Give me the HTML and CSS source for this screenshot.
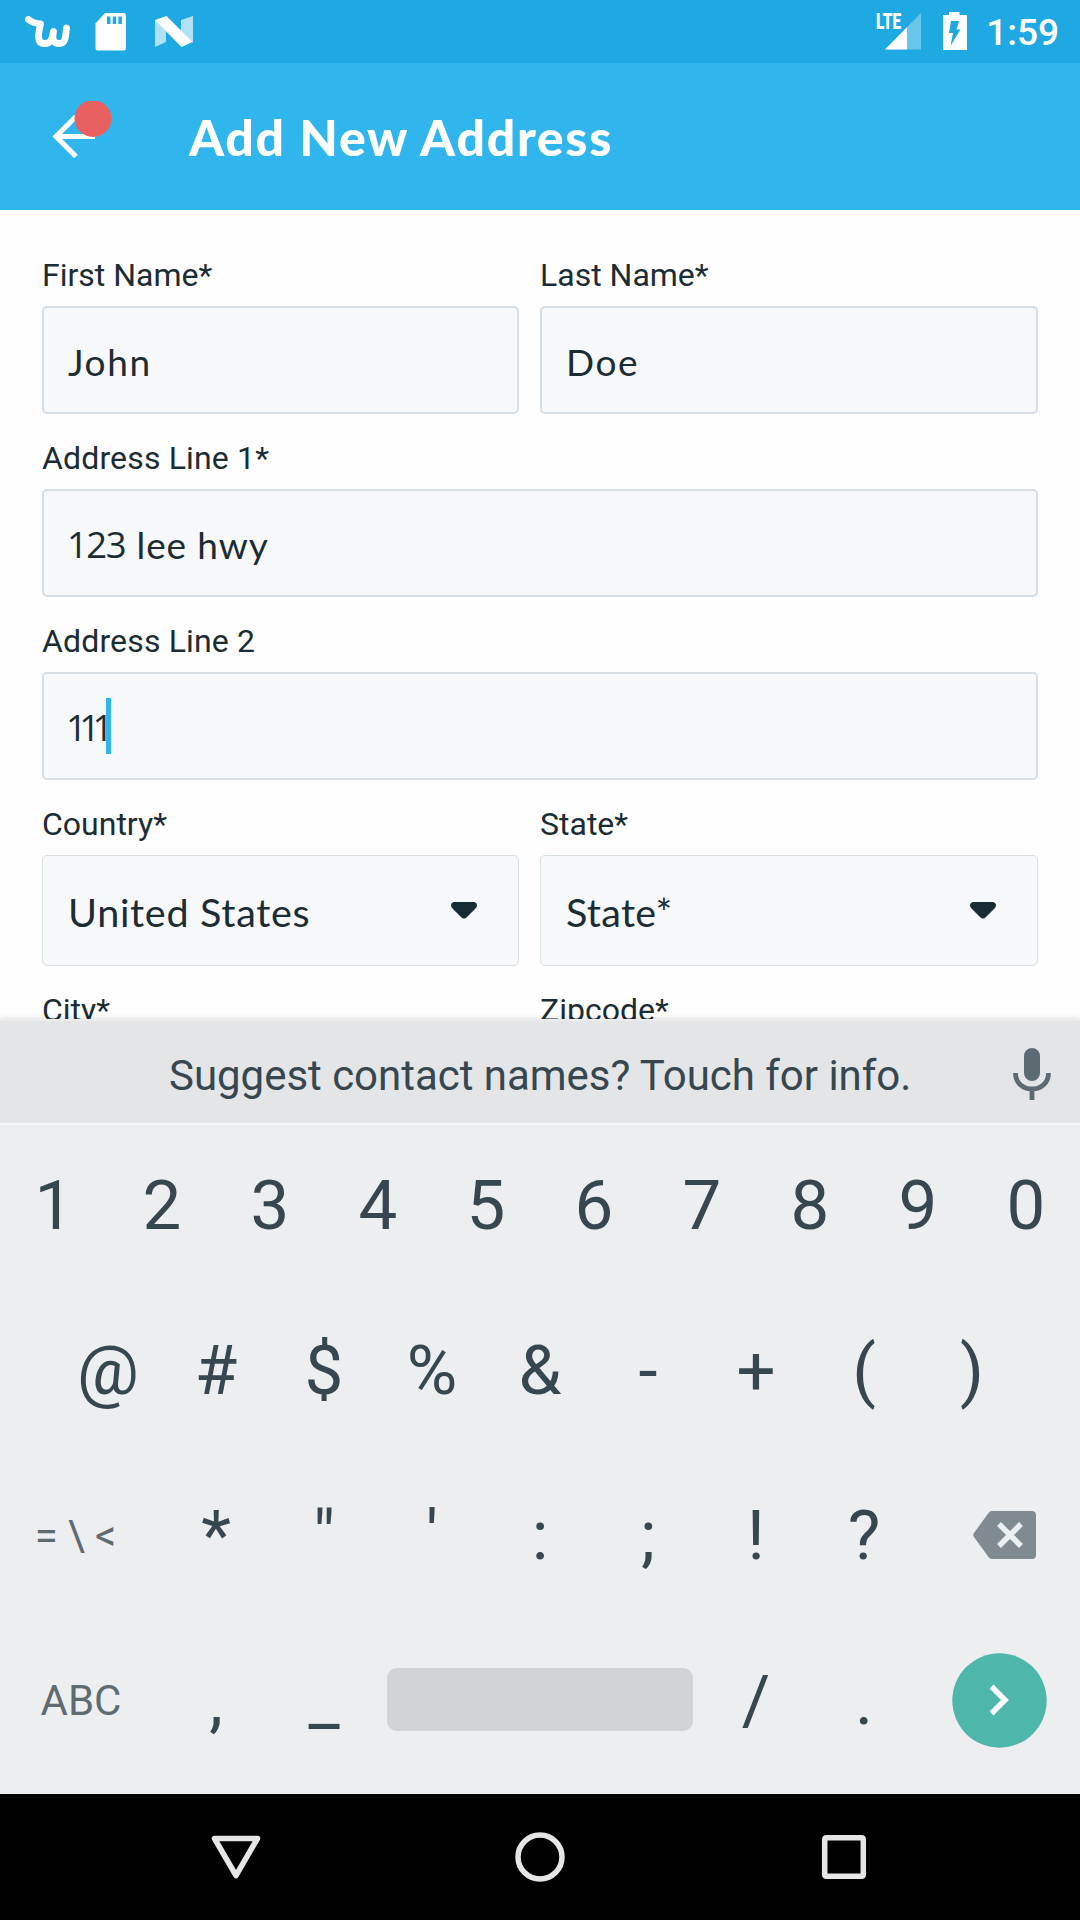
FILE: index.html
```html
<!DOCTYPE html>
<html lang="en">
<head>
<meta charset="utf-8">
<title>Add New Address</title>
<link rel="stylesheet" href="styles.css">
</head>
<body>
<div class="screen">
  <div class="status-bar">
    <svg class="status-notifications" width="180" height="63" viewBox="0 0 180 63">
      <path d="M5.500 19.500C9 22.500 13 23.500 17.500 24C15 35 13.500 43.500 21.500 43.500C29 43.500 29 38 30.500 31.500C29 39 30 43.500 36.500 43.500C43 43.500 42.500 36 43.500 28" fill="none" stroke="#fff" stroke-width="6.800" stroke-linejoin="round" stroke-linecap="round"/>
      <path d="M82 13h18.500a2.500 2.500 0 0 1 2.500 2.500v32.500a2.500 2.500 0 0 1-2.500 2.500h-25.500a2.500 2.500 0 0 1-2.500-2.500v-24.500z" fill="#fff"/>
      <path d="M84 16.500h3.500v7.500h-3.500zM89.700 16.500h3.500v7.500h-3.500zM95.400 16.500h3.500v7.500h-3.500z" fill="#1fa9e3"/>
      <path d="M132 20L143 29V42L132 47zM158 20L170 16V43L158 32z" fill="#fff" opacity=".65"/>
      <path d="M132 20L143.500 16L169.500 42L158.500 47z" fill="#fff"/>
    </svg>
    <div class="status-system">
      <svg width="94" height="63" viewBox="0 0 94 63">
        <path d="M48 13V49.500H12z" fill="#fff" opacity=".33"/>
        <path d="M34 27.200V49.500H12z" fill="#fff"/>
        <text class="lte" x="3" y="29" textLength="25" lengthAdjust="spacingAndGlyphs">LTE</text>
        <path d="M76 12h10.500v3h7.500v35H70V15h6z" fill="#fff"/>
        <path d="M78 21h8l-2.500 8.500h4L77.500 46l2.500-13h-4z" fill="#1fa9e3"/>
      </svg>
      <span class="clock">1:59</span>
    </div>
  </div>

  <header class="app-bar">
    <svg class="back" width="72" height="72" viewBox="0 0 72 72">
      <path d="M51 35.500H12M32 15.500L12 35.500L32 55.500" fill="none" stroke="#fff" stroke-width="5"/>
      <circle cx="49" cy="17.500" r="18.500" fill="#e96061"/>
    </svg>
    <h1 class="title">Add New Address</h1>
  </header>

  <main class="form">
    <div class="field"><label class="label">First Name*</label><div class="input name">John</div></div>
    <div class="field"><label class="label">Last Name*</label><div class="input name">Doe</div></div>
    <div class="field wide"><label class="label address">Address Line 1*</label><div class="input street"><span class="digits">123</span>&nbsp;lee hwy</div></div>
    <div class="field wide"><label class="label address">Address Line 2</label><div class="input"><span class="digits unit">111</span><i class="caret"></i></div></div>
    <div class="field">
      <label class="label">Country*</label>
      <div class="select">United States
        <svg width="26" height="17" viewBox="0 0 26 17"><path d="M3 0H23Q26 .5 26 3.500Q26 5 24 7L16 15Q13 18 10 15L2 7Q0 5 0 3.500Q0 .5 3 0z" fill="#182c34"/></svg>
      </div>
    </div>
    <div class="field">
      <label class="label">State*</label>
      <div class="select state">State*
        <svg width="26" height="17" viewBox="0 0 26 17"><path d="M3 0H23Q26 .5 26 3.500Q26 5 24 7L16 15Q13 18 10 15L2 7Q0 5 0 3.500Q0 .5 3 0z" fill="#182c34"/></svg>
      </div>
    </div>
    <div class="field"><label class="label">City*</label></div>
    <div class="field"><label class="label">Zipcode*</label></div>
  </main>

  <section class="keyboard">
    <div class="suggestions">
      <span class="hint">Suggest contact names? Touch for info.</span>
      <svg class="mic" width="38" height="52" viewBox="0 0 38 52">
        <rect x="11" y="0" width="16" height="33" rx="8" fill="#5c6a71"/>
        <path d="M2.500 25C2.500 35 10 41 19 41S35.500 35 35.500 25M19 40V52" fill="none" stroke="#5c6a71" stroke-width="4.800"/>
      </svg>
    </div>
    <div class="row"><span>1</span><span>2</span><span>3</span><span>4</span><span>5</span><span>6</span><span>7</span><span>8</span><span>9</span><span>0</span></div>
    <div class="row"><span>@</span><span>#</span><span>$</span><span>%</span><span>&amp;</span><span>-</span><span>+</span><span>(</span><span>)</span></div>
    <div class="row">
      <span class="mode symbols">=<b>\</b>&lt;</span><span>*</span><span>"</span><span>'</span><span>:</span><span>;</span><span>!</span><span>?</span>
      <span class="mode">
        <svg class="delete" width="63" height="48" viewBox="0 0 63 48">
          <path d="M19 0H59Q63 0 63 4V44Q63 48 59 48H19Q17 48 15.500 46L1 26Q-.5 24 1 22L15.500 2Q17 0 19 0z" fill="#7f8b91"/>
          <path d="M26 13L48 35M48 13L26 35" stroke="#eceff1" stroke-width="5.500"/>
        </svg>
      </span>
    </div>
    <div class="row">
      <span class="mode">ABC</span><span>,</span><span>_</span><span class="space"></span><span>/</span><span>.</span>
      <span class="mode">
        <svg class="enter" width="95" height="95" viewBox="0 0 95 95">
          <circle cx="47.500" cy="47.500" r="47.200" fill="#4fb6ac"/>
          <path d="M39.500 33.500L53 47L39.500 60.500" fill="none" stroke="#fff" stroke-width="5.500"/>
        </svg>
      </span>
    </div>
  </section>

  <nav class="nav-bar">
    <svg width="56" height="56" viewBox="0 0 56 56"><path d="M6.500 9.500H49.500L28 46.500z" fill="none" stroke="#e6e6e6" stroke-width="5.500" stroke-linejoin="round"/></svg>
    <svg width="56" height="56" viewBox="0 0 56 56"><circle cx="28" cy="28" r="22" fill="none" stroke="#e6e6e6" stroke-width="5.500"/></svg>
    <svg width="56" height="56" viewBox="0 0 56 56"><rect x="8.700" y="8.700" width="38.600" height="38.600" rx="1.500" fill="none" stroke="#e6e6e6" stroke-width="5.500"/></svg>
  </nav>
</div>
</body>
</html>
```

FILE: styles.css
```css
* { box-sizing: border-box; }

body {
  margin: 0;
  font-family: Roboto, "Liberation Sans", sans-serif;
}

.screen {
  display: flex;
  flex-direction: column;
  width: 1080px;
  height: 1920px;
  overflow: hidden;
  background: #fefefe;
}

svg { display: block; flex: none; }

/* Status bar */
.status-bar {
  display: flex;
  justify-content: space-between;
  flex: none;
  height: 63px;
  padding: 0 21px 0 23px;
  background: #1fa9e3;
  color: #fff;
}

.status-system { display: flex; }

.lte {
  font: 900 22px Roboto, sans-serif;
  fill: #fff;
}

.clock {
  padding-left: 19px;
  font-size: 37px;
  font-weight: 500;
  line-height: 66px;
  white-space: nowrap;
}

/* App bar */
.app-bar {
  display: flex;
  align-items: center;
  flex: none;
  height: 147px;
  padding-left: 44px;
  background: #30b5ec;
}

.title {
  margin: 1px 0 0 73px;
  color: #fff;
  font: 900 50px/60px Lato, sans-serif;
  letter-spacing: 1.7px;
  white-space: nowrap;
}

/* Address form */
.form {
  display: grid;
  grid-template-columns: 477px 498px;
  column-gap: 21px;
  align-content: start;
  flex: none;
  height: 809px;
  padding: 21px 42px 0;
  overflow: hidden;
  color: #1c2c33;
}

.wide { grid-column: 1 / 3; }

.label {
  display: block;
  height: 75px;
  padding-top: 23px;
  font-size: 32px;
  line-height: 42px;
  white-space: nowrap;
}

.address { letter-spacing: .15px; }

.input,
.select {
  display: flex;
  align-items: center;
  padding: 2px 24px 0;
  border: 2px solid #d6dfe5;
  border-radius: 5px;
  background: #f6f8fa;
  font-family: Lato, sans-serif;
  white-space: nowrap;
}

.input { height: 108px; font-size: 37px; }

.name { letter-spacing: 1.6px; }

.street { letter-spacing: .9px; }

.select {
  justify-content: space-between;
  height: 111px;
  padding: 2px 41px 0 25px;
  border: 1px solid #d9e1e5;
  font-size: 39.5px;
  letter-spacing: .7px;
}

.state { letter-spacing: .3px; }

.select svg { margin-top: -3px; }

.digits {
  margin-left: -1px;
  font-family: "Open Sans", sans-serif;
  font-size: 36.5px;
  letter-spacing: -1.5px;
}

.street .digits { margin-right: 1px; }

.unit {
  width: 39px;
  margin-left: -2px;
  letter-spacing: -7.6px;
}

.caret {
  width: 5px;
  height: 56px;
  margin: -2px 0 0 1px;
  background: #30b5ec;
}

/* Keyboard */
.keyboard {
  z-index: 1;
  flex: none;
  height: 775px;
  background: #eceef0;
  box-shadow: 0 -1px 5px rgba(0, 0, 0, .12);
}

.suggestions {
  display: flex;
  align-items: center;
  height: 104px;
  padding: 6px 29px 0 169px;
  border-top: 2px solid #ebeced;
  background: #e3e5e7;
  box-shadow: 0 2px 0 #f4f6f7;
}

.hint {
  flex: 1;
  color: #37474f;
  font-size: 42px;
  letter-spacing: -.03px;
  white-space: nowrap;
}

.mic { margin-top: -3px; }

.row {
  display: flex;
  justify-content: center;
  height: 165px;
  color: #37474f;
  font-size: 69px;
}

.row span {
  display: flex;
  align-items: center;
  justify-content: center;
  width: 108px;
}

.row .mode {
  width: 162px;
  color: #5f6b71;
  font-size: 42px;
}

.row .symbols { padding-right: 11px; }
.symbols b { padding: 0 10px; font-weight: 400; }

.delete { margin: -2px 0 0 11px; }

.enter { margin-top: -1px; }

.row .space {
  align-self: center;
  width: 306px;
  height: 63px;
  margin: -2px 9px 0;
  border-radius: 10px;
  background: #d0d4d7;
}

/* System navigation */
.nav-bar {
  display: flex;
  align-items: center;
  justify-content: center;
  gap: 248px;
  flex: none;
  height: 126px;
  background: #000;
}
```
